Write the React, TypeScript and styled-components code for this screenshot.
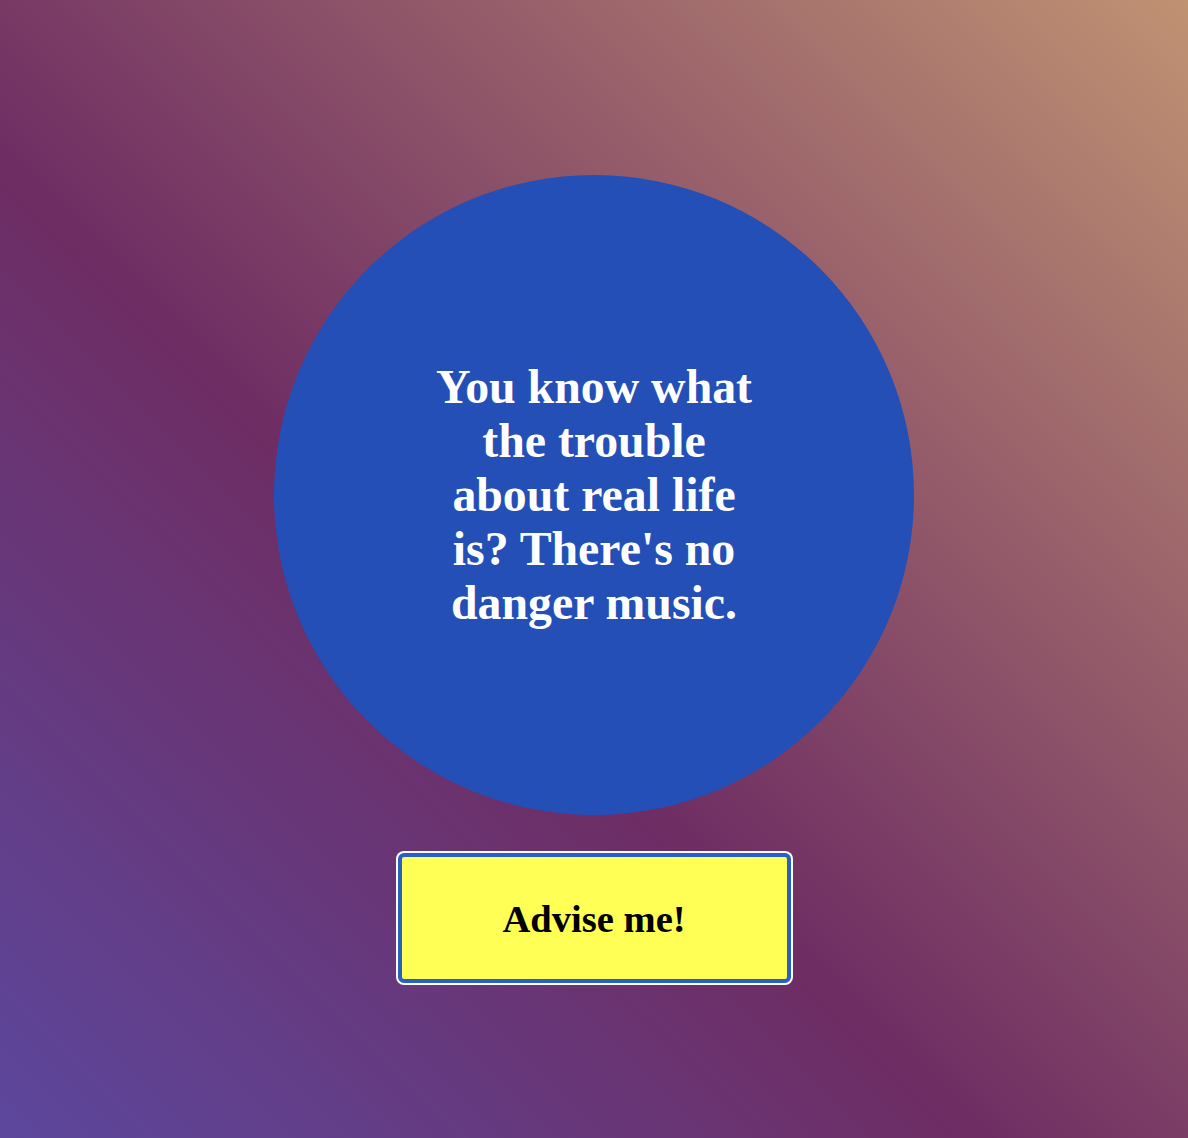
import React from "react";
import styled, { createGlobalStyle } from "styled-components";

const GlobalStyle = createGlobalStyle`
  html, body {
    margin: 0;
    padding: 0;
  }
  body {
    font-family: "Liberation Serif", "Times New Roman", serif;
  }
`;

const Page = styled.main`
  min-height: 1138px;
  box-sizing: border-box;
  display: flex;
  flex-direction: column;
  align-items: center;
  gap: 38px;
  padding-top: 175px;
  background: linear-gradient(45deg, #5c479d 0%, #6e2d63 42%, #c09272 100%);
`;

const Bubble = styled.section`
  width: 640px;
  height: 640px;
  border-radius: 50%;
  background: #234fb7;
  display: flex;
  align-items: center;
  justify-content: center;
`;

const Quote = styled.p`
  margin: 0;
  width: 334px;
  color: #ffffff;
  font-family: "Liberation Serif", "Times New Roman", serif;
  font-weight: 700;
  font-size: 47.8px;
  line-height: 54px;
  text-align: center;
`;

const AdviceButton = styled.button`
  width: 393px;
  height: 130px;
  box-sizing: border-box;
  background: #ffff55;
  border: 4px solid #2a5fc8;
  border-radius: 6px;
  box-shadow: 0 0 0 2px #ffffff;
  color: #000000;
  font-family: "Liberation Serif", "Times New Roman", serif;
  font-weight: 700;
  font-size: 38.6px;
  padding: 2px 0 0;
  cursor: pointer;
`;

export default function App() {
  return (
    <>
      <GlobalStyle />
      <Page>
        <Bubble>
          <Quote>
            You know what the trouble about real life is? There's no danger
            music.
          </Quote>
        </Bubble>
        <AdviceButton>Advise me!</AdviceButton>
      </Page>
    </>
  );
}
